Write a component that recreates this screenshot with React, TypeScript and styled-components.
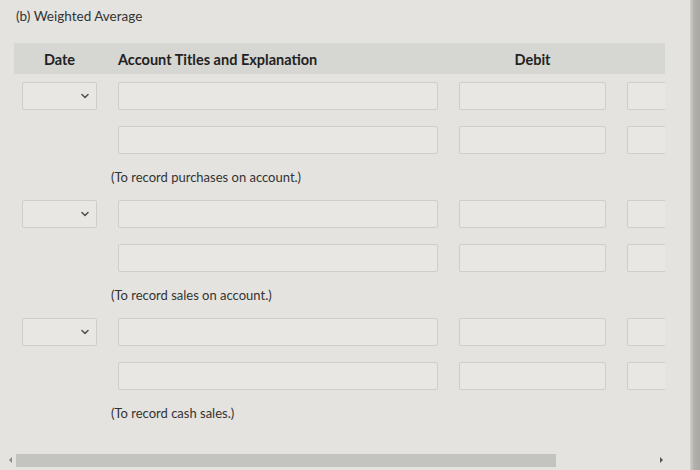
import React from 'react';
import styled, { createGlobalStyle } from 'styled-components';

const GlobalStyle = createGlobalStyle`
  html, body {
    margin: 0;
    padding: 0;
    background: #e4e3df;
  }
  body {
    font-family: Lato, "Open Sans", "Liberation Sans", sans-serif;
    color: #2a2a2a;
  }
`;

const Screen = styled.div`
  display: flex;
  width: 700px;
  height: 470px;
  overflow: hidden;
  background: #e4e3df;
`;

const Panel = styled.div`
  flex: 1;
  display: flex;
  flex-direction: column;
  min-width: 0;
`;

const Bezel = styled.div`
  width: 10px;
  background: linear-gradient(90deg, #d2d0ca 0%, #b3b1ab 40%, #a9a7a1 100%);
`;

const Title = styled.div`
  font-size: 13.5px;
  color: #333;
  padding: 8px 0 0 16px;
  height: 43px;
  box-sizing: border-box;
`;

const Viewport = styled.div`
  margin-left: 14px;
  width: 651px;
  overflow: hidden;
`;

const Columns = styled.div`
  display: grid;
  grid-template-columns: 75px 320px 147px 60px;
  column-gap: 21px;
  padding-left: 8px;
  align-items: center;
`;

const HeaderRow = styled(Columns)`
  height: 31px;
  background: #d6d6d2;
  margin-bottom: 8px;
`;

const HeadCell = styled.div<{ $center?: boolean }>`
  font-size: 14.5px;
  font-weight: 700;
  color: #222;
  text-align: ${p => (p.$center ? 'center' : 'left')};
  padding-top: 2px;
`;

const Entry = styled.div`
  display: flex;
  flex-direction: column;
`;

const LineRow = styled(Columns)`
  height: 28px;
  & + & {
    margin-top: 16px;
  }
`;

const Field = styled.div`
  height: 28px;
  box-sizing: border-box;
  border: 1px solid #cfcfca;
  border-radius: 2px;
  background: #e8e7e3;
`;

const DateSelect = styled(Field)`
  display: flex;
  align-items: center;
  justify-content: flex-end;
  padding-right: 7px;
  color: #555;
`;

const Note = styled.div`
  height: 46px;
  display: flex;
  align-items: center;
  padding-left: 97px;
  font-size: 13px;
  color: #333;
`;

const ScrollBar = styled.div`
  margin-top: auto;
  margin-bottom: 3px;
  display: flex;
  align-items: center;
  gap: 4px;
  padding-left: 9px;
  height: 14px;
`;

const Arrow = styled.div<{ $dir: 'left' | 'right' }>`
  width: 0;
  height: 0;
  border-top: 3px solid transparent;
  border-bottom: 3px solid transparent;
  ${p => (p.$dir === 'left' ? 'border-right: 3px solid #888;' : 'border-left: 3px solid #555;')}
`;

const Track = styled.div`
  width: 640px;
  height: 13px;
  display: flex;
`;

const Thumb = styled.div`
  height: 100%;
  background: #c3c3c0;
`;

const Chevron = () => (
  <svg width="8" height="6" viewBox="0 0 8 6" fill="none">
    <path d="M1 1.5 L4 4.5 L7 1.5" stroke="currentColor" strokeWidth="1.6" strokeLinecap="round" strokeLinejoin="round" />
  </svg>
);

const entries = [
  '(To record purchases on account.)',
  '(To record sales on account.)',
  '(To record cash sales.)',
];

export default function App() {
  return (
    <>
      <GlobalStyle />
      <Screen>
        <Panel>
          <Title>(b) Weighted Average</Title>
          <Viewport>
            <HeaderRow>
              <HeadCell $center>Date</HeadCell>
              <HeadCell>Account Titles and Explanation</HeadCell>
              <HeadCell $center>Debit</HeadCell>
              <HeadCell />
            </HeaderRow>
            {entries.map(note => (
              <Entry key={note}>
                <LineRow>
                  <DateSelect>
                    <Chevron />
                  </DateSelect>
                  <Field />
                  <Field />
                  <Field />
                </LineRow>
                <LineRow>
                  <div />
                  <Field />
                  <Field />
                  <Field />
                </LineRow>
                <Note>{note}</Note>
              </Entry>
            ))}
          </Viewport>
          <ScrollBar>
            <Arrow $dir="left" />
            <Track>
              <Thumb style={{ width: `${(540 / 640) * 100}%` }} />
            </Track>
            <Arrow $dir="right" />
          </ScrollBar>
        </Panel>
        <Bezel />
      </Screen>
    </>
  );
}
